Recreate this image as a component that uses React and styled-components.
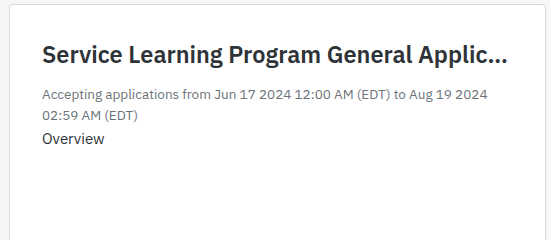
import React from "react";
import styled, { createGlobalStyle } from "styled-components";

const GlobalStyle = createGlobalStyle`
  html, body {
    margin: 0;
    padding: 0;
    background: #f5f6f6;
  }
  body {
    font-family: "IBM Plex Sans", "Noto Sans", "Liberation Sans", sans-serif;
    overflow: hidden;
  }
`;

const Page = styled.div`
  width: 550px;
  height: 100vh;
  min-height: 206px;
  padding: 4px 4px 0 9px;
  box-sizing: border-box;
  overflow: hidden;
`;

const Card = styled.div`
  background: #ffffff;
  border: 1px solid #d6d9db;
  border-radius: 4px;
  height: calc(100% + 20px);
  padding: 34px 32px 32px 32px;
  box-sizing: border-box;
  width: 537px;
`;

const Title = styled.h2`
  margin: 0;
  font-size: 23.5px;
  font-weight: 600;
  line-height: 30px;
  color: #2e3338;
  white-space: nowrap;
  overflow: hidden;
  text-overflow: ellipsis;
`;

const Dates = styled.p`
  margin: 15px 0 0;
  font-size: 13.5px;
  line-height: 21px;
  color: #6b737a;
`;

const Link = styled.div`
  margin-top: 3px;
  font-size: 15px;
  line-height: 20px;
  color: #2e3338;
`;

const App = () => {
  return (
    <Page>
      <GlobalStyle />
      <Card>
        <Title>Service Learning Program General Application 2024</Title>
        <Dates>
          Accepting applications from Jun 17 2024 12:00 AM (EDT) to Aug 19 2024
          02:59 AM (EDT)
        </Dates>
        <Link>Overview</Link>
      </Card>
    </Page>
  );
};

export default App;
